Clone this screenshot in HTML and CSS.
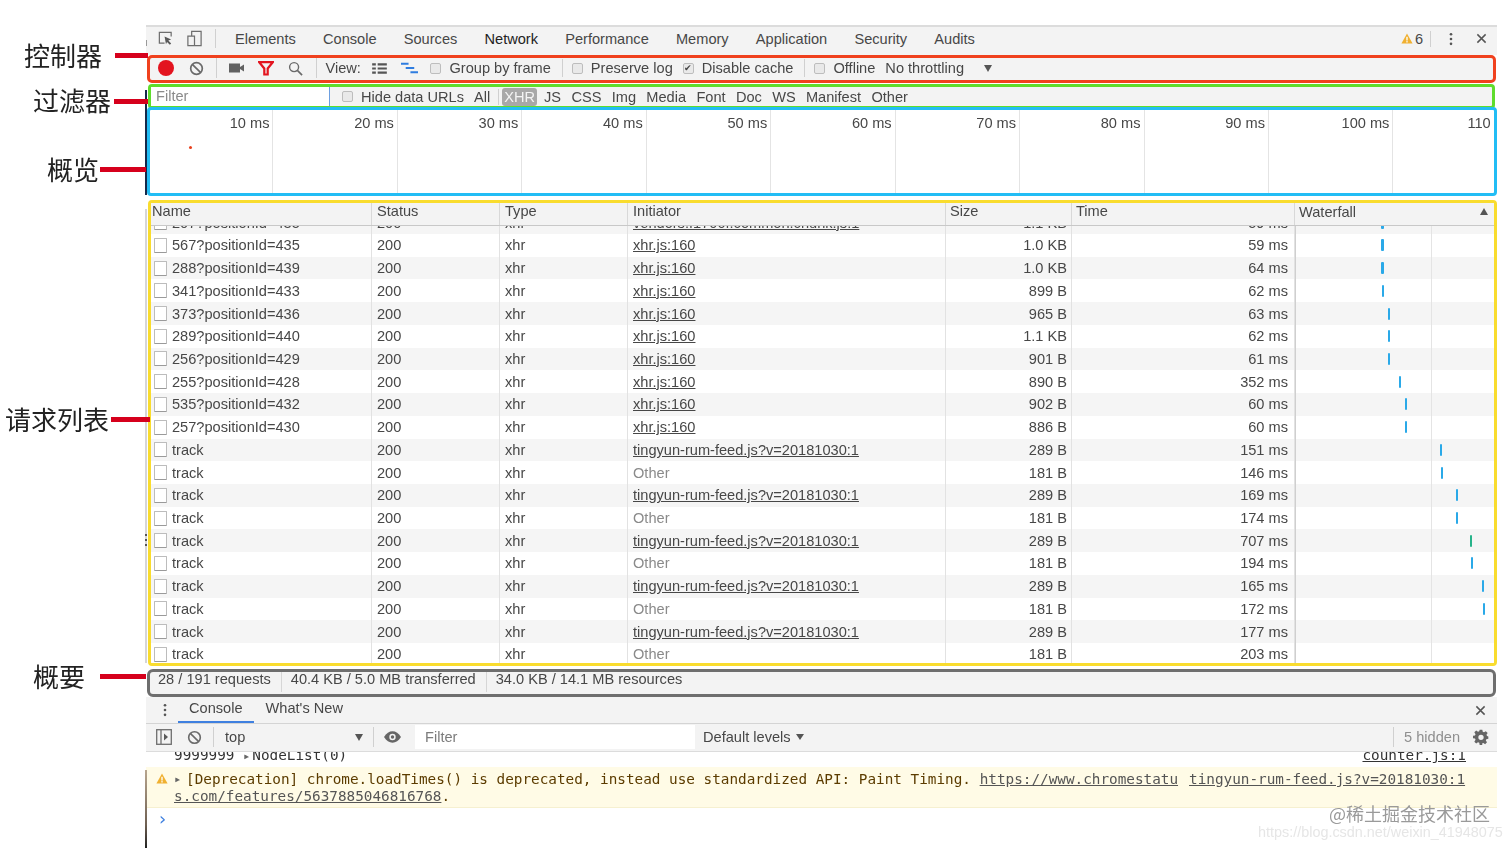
FILE: index.html
```html
<!DOCTYPE html>
<html lang="zh">
<head>
<meta charset="utf-8">
<title>Network</title>
<link rel="stylesheet" href="styles.css">
</head>
<body>
<div class="devtools">
  <div class="tabbar">
    <svg class="ico ico-inspect" viewBox="0 0 18 18"><path d="M8 14H2.5V2.5H15V7" fill="none" stroke="#6e6e6e" stroke-width="1.3"/><path d="M8 7l7 3-3 1.2 3 3-1.4 1.4-3-3L9.5 15z" fill="#5a5a5a"/></svg>
    <svg class="ico ico-device" viewBox="0 0 18 18"><path d="M6 6V1.5h10v15H2V6.5h7v10" fill="none" stroke="#6e6e6e" stroke-width="1.3"/></svg>
    <span class="sep sep-tall"></span>
    <nav class="tabs">
      <span>Elements</span><span>Console</span><span>Sources</span><span class="tab-on">Network</span><span>Performance</span><span>Memory</span><span>Application</span><span>Security</span><span>Audits</span>
    </nav>
    <div class="tab-end">
      <svg class="ico-warn" viewBox="0 0 14 13"><path d="M7 .5l6.600 12H.4z" fill="#f0b030"/><rect x="6.200" y="4.500" width="1.600" height="4.400" fill="#fff"/><rect x="6.200" y="9.600" width="1.600" height="1.600" fill="#fff"/></svg>
      <span class="warn-count">6</span>
      <span class="sep sep-warn"></span>
      <svg class="ico-dots" viewBox="0 0 4 16"><circle cx="2" cy="2.5" r="1.5"/><circle cx="2" cy="8" r="1.5"/><circle cx="2" cy="13.5" r="1.5"/></svg>
      <svg class="ico-x" viewBox="0 0 12 12"><path d="M1.5 1.5l9 9M10.5 1.5l-9 9" stroke="#555" stroke-width="1.6"/></svg>
    </div>
  </div>

  <div class="controls">
    <span class="rec"></span>
    <svg class="ico-block" viewBox="0 0 16 16"><circle cx="8" cy="8" r="6.200" fill="none" stroke="#6a6a6a" stroke-width="1.8"/><path d="M3.800 3.800l8.400 8.400" stroke="#6a6a6a" stroke-width="1.8"/></svg>
    <span class="sep sep-a"></span>
    <svg class="ico-cam" viewBox="0 0 16 12"><rect x="0" y="1.500" width="11" height="9" fill="#616161"/><path d="M11 5l4-2.500v7L11 7z" fill="#616161"/></svg>
    <svg class="ico-filter" viewBox="0 0 16 15"><path d="M1.200 1.200h13.600L9.700 7.500v6H6.300v-6z" fill="none" stroke="#e3141f" stroke-width="2.200"/></svg>
    <svg class="ico-search" viewBox="0 0 16 16"><circle cx="6.500" cy="6.500" r="4.800" fill="none" stroke="#6a6a6a" stroke-width="1.500"/><path d="M10 10l5 5" stroke="#6a6a6a" stroke-width="1.800"/></svg>
    <span class="sep sep-b"></span>
    <span class="lbl lbl-view">View:</span>
    <svg class="ico-list" viewBox="0 0 16 12"><path d="M0 1.500h4M6 1.500h10M0 6h4M6 6h10M0 10.500h4M6 10.500h10" stroke="#555" stroke-width="2.400"/></svg>
    <svg class="ico-wf" viewBox="0 0 18 12"><path d="M0 1.500h8M5 6h9M10 10.500h8" stroke="#2f7de0" stroke-width="2"/></svg>
    <span class="cb cb-group"></span><span class="lbl">Group by frame</span>
    <span class="sep sep-c"></span>
    <span class="cb"></span><span class="lbl lbl-preserve">Preserve log</span>
    <span class="cb cb-on">✔</span><span class="lbl">Disable cache</span>
    <span class="sep sep-d"></span>
    <span class="cb"></span><span class="lbl">Offline</span>
    <span class="lbl lbl-throttle">No throttling</span>
    <span class="caret caret-throttle"></span>
  </div>

  <div class="filters">
    <div class="filter-input">Filter</div>
    <span class="cb cb-hide"></span><span class="lbl">Hide data URLs</span>
    <span class="lbl lbl-all">All</span>
    <span class="sep sep-e"></span>
    <span class="pill">XHR</span>
    <span class="type">JS</span><span class="type">CSS</span><span class="type">Img</span><span class="type">Media</span><span class="type">Font</span><span class="type">Doc</span><span class="type">WS</span><span class="type">Manifest</span><span class="type">Other</span>
  </div>

  <div class="overview">
    <div class="tick">10 ms</div><div class="tick">20 ms</div><div class="tick">30 ms</div><div class="tick">40 ms</div><div class="tick">50 ms</div><div class="tick">60 ms</div><div class="tick">70 ms</div><div class="tick">80 ms</div><div class="tick">90 ms</div><div class="tick">100 ms</div><div class="tick tick-last">110 ms</div>
    <span class="dot"></span>
  </div>

  <div class="table">
    <div class="row head">
      <div class="c">Name</div><div class="c">Status</div><div class="c">Type</div><div class="c">Initiator</div><div class="c">Size</div><div class="c">Time</div><div class="c c-wf-head">Waterfall<span class="caret-up"></span></div>
    </div>
    <div class="scroller">
      <div class="rows">
        <div class="row"><div class="c c-name"><i class="file"></i>207?positionId=435</div><div class="c">200</div><div class="c">xhr</div><div class="c"><u>vendors.f1700f.common.chunk.js:1</u></div><div class="c r">1.1 KB</div><div class="c r">59 ms</div><div class="c wf"><b style="margin-left:85px"></b></div></div>
        <div class="row"><div class="c c-name"><i class="file"></i>567?positionId=435</div><div class="c">200</div><div class="c">xhr</div><div class="c"><u>xhr.js:160</u></div><div class="c r">1.0 KB</div><div class="c r">59 ms</div><div class="c wf"><b style="margin-left:85px"></b></div></div>
        <div class="row"><div class="c c-name"><i class="file"></i>288?positionId=439</div><div class="c">200</div><div class="c">xhr</div><div class="c"><u>xhr.js:160</u></div><div class="c r">1.0 KB</div><div class="c r">64 ms</div><div class="c wf"><b style="margin-left:85px"></b></div></div>
        <div class="row"><div class="c c-name"><i class="file"></i>341?positionId=433</div><div class="c">200</div><div class="c">xhr</div><div class="c"><u>xhr.js:160</u></div><div class="c r">899 B</div><div class="c r">62 ms</div><div class="c wf"><b style="margin-left:85.500px"></b></div></div>
        <div class="row"><div class="c c-name"><i class="file"></i>373?positionId=436</div><div class="c">200</div><div class="c">xhr</div><div class="c"><u>xhr.js:160</u></div><div class="c r">965 B</div><div class="c r">63 ms</div><div class="c wf"><b style="margin-left:91.500px"></b></div></div>
        <div class="row"><div class="c c-name"><i class="file"></i>289?positionId=440</div><div class="c">200</div><div class="c">xhr</div><div class="c"><u>xhr.js:160</u></div><div class="c r">1.1 KB</div><div class="c r">62 ms</div><div class="c wf"><b style="margin-left:91.500px"></b></div></div>
        <div class="row"><div class="c c-name"><i class="file"></i>256?positionId=429</div><div class="c">200</div><div class="c">xhr</div><div class="c"><u>xhr.js:160</u></div><div class="c r">901 B</div><div class="c r">61 ms</div><div class="c wf"><b style="margin-left:91.500px"></b></div></div>
        <div class="row"><div class="c c-name"><i class="file"></i>255?positionId=428</div><div class="c">200</div><div class="c">xhr</div><div class="c"><u>xhr.js:160</u></div><div class="c r">890 B</div><div class="c r">352 ms</div><div class="c wf"><b style="margin-left:102.500px"></b></div></div>
        <div class="row"><div class="c c-name"><i class="file"></i>535?positionId=432</div><div class="c">200</div><div class="c">xhr</div><div class="c"><u>xhr.js:160</u></div><div class="c r">902 B</div><div class="c r">60 ms</div><div class="c wf"><b style="margin-left:108.500px"></b></div></div>
        <div class="row"><div class="c c-name"><i class="file"></i>257?positionId=430</div><div class="c">200</div><div class="c">xhr</div><div class="c"><u>xhr.js:160</u></div><div class="c r">886 B</div><div class="c r">60 ms</div><div class="c wf"><b style="margin-left:108.500px"></b></div></div>
        <div class="row"><div class="c c-name"><i class="file"></i>track</div><div class="c">200</div><div class="c">xhr</div><div class="c"><u>tingyun-rum-feed.js?v=20181030:1</u></div><div class="c r">289 B</div><div class="c r">151 ms</div><div class="c wf"><b style="margin-left:143.500px"></b></div></div>
        <div class="row"><div class="c c-name"><i class="file"></i>track</div><div class="c">200</div><div class="c">xhr</div><div class="c muted">Other</div><div class="c r">181 B</div><div class="c r">146 ms</div><div class="c wf"><b style="margin-left:144.500px"></b></div></div>
        <div class="row"><div class="c c-name"><i class="file"></i>track</div><div class="c">200</div><div class="c">xhr</div><div class="c"><u>tingyun-rum-feed.js?v=20181030:1</u></div><div class="c r">289 B</div><div class="c r">169 ms</div><div class="c wf"><b style="margin-left:159.500px"></b></div></div>
        <div class="row"><div class="c c-name"><i class="file"></i>track</div><div class="c">200</div><div class="c">xhr</div><div class="c muted">Other</div><div class="c r">181 B</div><div class="c r">174 ms</div><div class="c wf"><b style="margin-left:159.500px"></b></div></div>
        <div class="row"><div class="c c-name"><i class="file"></i>track</div><div class="c">200</div><div class="c">xhr</div><div class="c"><u>tingyun-rum-feed.js?v=20181030:1</u></div><div class="c r">289 B</div><div class="c r">707 ms</div><div class="c wf"><b class="green" style="margin-left:173.500px"></b></div></div>
        <div class="row"><div class="c c-name"><i class="file"></i>track</div><div class="c">200</div><div class="c">xhr</div><div class="c muted">Other</div><div class="c r">181 B</div><div class="c r">194 ms</div><div class="c wf"><b style="margin-left:174.500px"></b></div></div>
        <div class="row"><div class="c c-name"><i class="file"></i>track</div><div class="c">200</div><div class="c">xhr</div><div class="c"><u>tingyun-rum-feed.js?v=20181030:1</u></div><div class="c r">289 B</div><div class="c r">165 ms</div><div class="c wf"><b style="margin-left:185.500px"></b></div></div>
        <div class="row"><div class="c c-name"><i class="file"></i>track</div><div class="c">200</div><div class="c">xhr</div><div class="c muted">Other</div><div class="c r">181 B</div><div class="c r">172 ms</div><div class="c wf"><b style="margin-left:186.500px"></b></div></div>
        <div class="row"><div class="c c-name"><i class="file"></i>track</div><div class="c">200</div><div class="c">xhr</div><div class="c"><u>tingyun-rum-feed.js?v=20181030:1</u></div><div class="c r">289 B</div><div class="c r">177 ms</div><div class="c wf"></div></div>
        <div class="row"><div class="c c-name"><i class="file"></i>track</div><div class="c">200</div><div class="c">xhr</div><div class="c muted">Other</div><div class="c r">181 B</div><div class="c r">203 ms</div><div class="c wf"></div></div>
      </div>
    </div>
  </div>

  <div class="summary">
    <span>28 / 191 requests</span><span>40.4 KB / 5.0 MB transferred</span><span>34.0 KB / 14.1 MB resources</span>
  </div>

  <div class="drawer-tabs">
    <svg class="ico-dots drawer-dots" viewBox="0 0 4 16"><circle cx="2" cy="2.500" r="1.500"/><circle cx="2" cy="8" r="1.500"/><circle cx="2" cy="13.500" r="1.500"/></svg>
    <span class="dtab dtab-on">Console</span>
    <span class="dtab dtab-new">What's New</span>
    <svg class="ico-x drawer-x" viewBox="0 0 12 12"><path d="M1.500 1.500l9 9M10.500 1.500l-9 9" stroke="#555" stroke-width="1.600"/></svg>
  </div>

  <div class="console-bar">
    <svg class="ico-side" viewBox="0 0 16 16"><rect x=".7" y=".7" width="14.600" height="14.600" fill="none" stroke="#6e6e6e" stroke-width="1.300"/><path d="M5 1v14" stroke="#6e6e6e" stroke-width="1.300"/><path d="M8 4.500l4 3.500-4 3.500z" fill="#5a5a5a"/></svg>
    <svg class="ico-block ico-block2" viewBox="0 0 16 16"><circle cx="8" cy="8" r="6.200" fill="none" stroke="#6a6a6a" stroke-width="1.700"/><path d="M3.800 3.800l8.400 8.400" stroke="#6a6a6a" stroke-width="1.700"/></svg>
    <span class="sep sep-f"></span>
    <span class="lbl ctx">top</span>
    <span class="caret caret-ctx"></span>
    <span class="sep sep-g"></span>
    <svg class="ico-eye" viewBox="0 0 18 12"><path d="M0 6c2.500-4 5.500-6 9-6s6.500 2 9 6c-2.500 4-5.500 6-9 6s-6.500-2-9-6z" fill="#666"/><circle cx="9" cy="6" r="3.400" fill="#f3f3f3"/><circle cx="9" cy="6" r="1.800" fill="#666"/></svg>
    <div class="cfilter">Filter</div>
    <span class="lbl levels">Default levels</span>
    <span class="caret caret-levels"></span>
    <span class="sep sep-h"></span>
    <span class="hidden-count">5 hidden</span>
    <svg class="ico-gear" viewBox="0 0 24 24"><path fill="#666" fill-rule="evenodd" d="M10 1h4l.6 3.200 1.900.8 2.700-1.800 2.800 2.800-1.800 2.700.8 1.900L23 11.200v3.600l-3 .6-.8 1.900 1.800 2.700-2.800 2.800-2.700-1.800-1.900.8L14 24h-4l-.6-3.200-1.900-.8-2.700 1.800L2 19l1.800-2.700-.8-1.900L0 13.800v-3.600l3-.6.800-1.900L2 5l2.800-2.800 2.700 1.800 1.900-.8zM12 8.500a4 4 0 1 0 0 8 4 4 0 0 0 0-8z"/></svg>
  </div>

  <div class="console">
    <div class="log-line"><span class="log-text">9999999 <span class="tri">▸</span>NodeList(0)</span><u class="log-src">counter.js:1</u></div>
    <div class="warn-row">
      <svg class="ico-warn warn-icon" viewBox="0 0 14 13"><path d="M7 .5l6.600 12H.4z" fill="#f0b030"/><rect x="6.200" y="4.500" width="1.600" height="4.400" fill="#fff"/><rect x="6.200" y="9.600" width="1.600" height="1.600" fill="#fff"/></svg>
      <div class="warn-body">
        <div class="warn-first"><span class="tri tri-warn">▸</span><span>[Deprecation] chrome.loadTimes() is deprecated, instead use standardized API: Paint Timing. <u>https://www.chromestatu</u></span><u class="warn-src">tingyun-rum-feed.js?v=20181030:1</u></div>
        <div class="warn-second"><u>s.com/features/5637885046816768</u>.</div>
      </div>
    </div>
    <div class="prompt">›</div>
  </div>
</div>

<span class="edge edge-top"></span>
<span class="edge edge-navy"></span>
<span class="edge edge-grey"></span>
<span class="edge edge-handle"></span>
<span class="edge edge-brown"></span>

<div class="note note-1"><span class="note-text">控制器</span><span class="note-bar"></span></div>
<div class="note note-2"><span class="note-text">过滤器</span><span class="note-bar"></span></div>
<div class="note note-3"><span class="note-text">概览</span><span class="note-bar"></span></div>
<div class="note note-4"><span class="note-text">请求列表</span><span class="note-bar"></span></div>
<div class="note note-5"><span class="note-text">概要</span><span class="note-bar"></span></div>

<div class="mark mark-a">@稀土掘金技术社区</div>
<div class="mark mark-b">https://blog.csdn.net/weixin_41948075</div>
</body>
</html>
```

FILE: styles.css
```css
* { box-sizing: border-box; }
html, body { margin: 0; padding: 0; }
body {
  width: 1512px;
  height: 848px;
  overflow: hidden;
  position: relative;
  background: #fff;
  font-family: "Liberation Sans", Arial, sans-serif;
  font-size: 14.6px;
  color: #474747;
}
svg { flex: none; display: block; }

.devtools {
  margin-left: 146px;
  width: 1351px;
  padding-top: 25px;
  display: flex;
  flex-direction: column;
  height: 848px;
  filter: blur(.45px);
}

.sep { flex: none; width: 1px; height: 20px; background: #d0d0d0; }

/* tab bar */
.tabbar {
  height: 30px;
  flex: none;
  display: flex;
  align-items: center;
  background: #f3f3f3;
  border-top: 2px solid #dcdcdc;
  padding: 0 0 5px 11px;
}
.ico-inspect { width: 17px; height: 17px; }
.ico-device { width: 17px; height: 17px; margin-left: 12px; }
.sep-tall { margin-left: 12px; height: 19px; }
.tabs { display: flex; gap: 27.2px; margin-left: 19px; }
.tab-on { color: #222; }
.tab-end { margin-left: auto; display: flex; align-items: center; padding-right: 10px; }
.ico-warn { width: 12px; height: 11px; }
.warn-count { margin-left: 2px; }
.sep-warn { height: 16px; margin-left: 7px; }
.ico-dots { width: 4px; height: 14px; margin-left: 18px; fill: #555; }
.ico-x { width: 11px; height: 11px; margin-left: 23px; }

/* controls */
.controls {
  height: 28px;
  flex: none;
  margin: 0 1px;
  display: flex;
  align-items: center;
  background: #f3f3f3;
  border: 3px solid #f0411e;
  border-radius: 5px;
  padding: 0 0 2px 7.5px;
}
.rec { flex: none; width: 16px; height: 16px; border-radius: 50%; background: #e3141f; }
.ico-block { width: 15px; height: 15px; margin-left: 15px; }
.sep-a { margin-left: 12px; }
.ico-cam { width: 16px; height: 12px; margin-left: 12px; }
.ico-filter { width: 16px; height: 15px; margin-left: 13px; }
.ico-search { width: 15px; height: 15px; margin-left: 14px; }
.sep-b { margin-left: 13px; }
.lbl { flex: none; white-space: nowrap; }
.lbl-view { margin-left: 9px; }
.ico-list { width: 15px; height: 11px; margin-left: 11px; }
.ico-wf { width: 17px; height: 12px; margin-left: 14px; }
.cb {
  flex: none;
  width: 11px;
  height: 11px;
  margin-right: 8px;
  border: 1px solid #bdbdbd;
  border-radius: 2px;
  background: #e9e9e9;
  font-size: 9px;
  line-height: 9px;
  text-align: center;
  color: #444;
}
.cb-group { margin-left: 12.5px; }
.sep-c { margin: 0 9px 0 11px; height: 18px; }
.lbl-preserve { margin-right: 10px; }
.sep-d { margin: 0 9px 0 11px; height: 18px; }
.lbl-throttle { margin-left: 10px; }
.caret { flex: none; width: 0; height: 0; border-left: 4px solid transparent; border-right: 4px solid transparent; border-top: 7px solid #555; }
.caret-throttle { margin-left: 20px; }

/* filters */
.filters {
  height: 25px;
  flex: none;
  margin: 1px 2px 0;
  display: flex;
  align-items: center;
  background: #f3f3f3;
  border: 3px solid #5fdc2c;
  border-radius: 4px;
}
.filter-input {
  flex: none;
  width: 179px;
  height: 100%;
  background: #fff;
  border-right: 1px solid #6d9fe0;
  padding-left: 5px;
  line-height: 18px;
  color: #8a8a8a;
}
.cb-hide { margin-left: 12px; }
.lbl-all { margin-left: 10px; }
.sep-e { margin-left: 8px; height: 16px; }
.pill {
  flex: none;
  margin-left: 3px;
  padding: 0 2px;
  height: 18px;
  line-height: 18px;
  border-radius: 3px;
  background: #a8a8a8;
  color: #f4f4f4;
}
.type { flex: none; margin-left: 10.3px; }
.pill + .type { margin-left: 7px; }

/* overview */
.overview {
  position: relative;
  height: 89px;
  flex: none;
  margin: -2px 0 0 1px;
  display: grid;
  grid-template-columns: 123.45px repeat(9, 124.45px) 1fr;
  background: #fff;
  border: 3px solid #22bdf5;
  border-radius: 4px;
  overflow: hidden;
}
.tick {
  text-align: right;
  padding: 4px 3px 0 0;
  border-right: 1px solid #e4e4e4;
  line-height: 18px;
  white-space: nowrap;
}
.tick-last { border: 0; text-align: left; padding-left: 74px; }
.dot {
  position: absolute;
  left: 39px;
  top: 36px;
  width: 3px;
  height: 3px;
  border-radius: 50%;
  background: #e8401c;
}

/* table */
.table {
  height: 466px;
  flex: none;
  margin: 4px 0 0 2px;
  display: flex;
  flex-direction: column;
  border: 3px solid #f9dc2e;
  border-radius: 4px;
  overflow: hidden;
  background: #fff;
}
.row {
  display: grid;
  grid-template-columns: 221px 128px 128px 318px 126px 223px 1fr;
  height: 22.72px;
  background: #fff;
}
.rows .row:nth-child(odd) { background: #f5f5f5; }
.c {
  display: flex;
  align-items: center;
  padding-left: 5px;
  padding-right: 6px;
  border-right: 1px solid #e2e2e2;
  white-space: nowrap;
  overflow: hidden;
}
.c:last-child { border-right: 0; }
.r { justify-content: flex-end; }
.row .c:nth-child(5) { padding-right: 4px; }
.muted { color: #8a8a8a; }
.head { height: 23px; flex: none; background: #f3f3f3; border-bottom: 1px solid #c8c8c8; }
.head .c { align-items: flex-start; line-height: 16px; border-right-color: #d8d8d8; }
.head .c:first-child { padding-left: 1px; }
.head .c:nth-child(n+5) { padding-left: 4px; }
.c-wf-head { padding-top: 1px; justify-content: space-between; padding-right: 6px; }
.caret-up { width: 0; height: 0; margin-top: 4px; border-left: 4px solid transparent; border-right: 4px solid transparent; border-bottom: 7px solid #555; }
.scroller { flex: 1; overflow: hidden; }
.rows { margin-top: -14.7px; }
.c-name { padding-left: 3px; }
.file {
  flex: none;
  width: 13px;
  height: 15px;
  margin-right: 5px;
  background: #fff;
  border: 1px solid #bcbcbc;
  border-bottom-color: #9a9a9a;
  border-radius: 1px;
}
.wf {
  padding: 0;
  background: linear-gradient(#e4e4e4, #e4e4e4) no-repeat 135px 0 / 1px 100%;
  border-left: 1px solid #cfcfcf;
}
.wf b {
  flex: none;
  display: block;
  width: 2.5px;
  height: 12px;
  border-radius: 1px;
  background: #2aa9e8;
}
.wf .green { background: #27b38a; }

/* summary */
.summary {
  height: 28px;
  flex: none;
  margin: 3px 1px 0;
  display: flex;
  align-items: flex-start;
  background: #f3f3f3;
  border: 3px solid #6e6e6e;
  border-radius: 6px;
  padding-left: 8px;
  line-height: 15px;
  white-space: nowrap;
}
.summary span { padding: 0 10px 0 0; margin-right: 9px; height: 20px; border-right: 1px solid #d6d6d6; }
.summary span:last-child { border: 0; }

/* drawer */
.drawer-tabs {
  height: 27px;
  flex: none;
  display: flex;
  align-items: center;
  background: #f3f3f3;
  border-bottom: 1px solid #d4d4d4;
  padding-left: 17px;
}
.drawer-dots { margin-left: 0; }
.dtab { flex: none; height: 100%; line-height: 22px; padding: 0 11px; }
.dtab-on { margin-left: 11px; border-bottom: 2px solid #3f80e0; }
.dtab-new { margin-left: 1px; }
.drawer-x { margin-left: auto; margin-right: 11px; }

.console-bar {
  height: 28px;
  flex: none;
  display: flex;
  align-items: center;
  background: #f3f3f3;
  border-bottom: 1px solid #dcdcdc;
  padding: 0 0 1px 10px;
}
.ico-side { width: 16px; height: 16px; }
.ico-block2 { margin-left: 15px; }
.sep-f { margin-left: 11px; }
.ctx { margin-left: 11px; width: 130px; }
.sep-g { margin-left: 10px; }
.ico-eye { width: 17px; height: 12px; margin-left: 10px; }
.cfilter {
  flex: none;
  width: 280px;
  height: 24px;
  line-height: 24px;
  margin-left: 14px;
  padding-left: 10px;
  background: #fff;
  color: #7c7c7c;
}
.levels { margin-left: 8px; }
.caret-levels { margin-left: 5px; border-top-width: 6px; }
.sep-h { margin-left: auto; height: 20px; }
.hidden-count { flex: none; margin-left: 10px; color: #8f8f8f; }
.ico-gear { width: 16px; height: 16px; margin-left: 13px; margin-right: 8px; }

.console {
  flex: 1;
  min-height: 0;
  overflow: hidden;
  background: #fff;
  font-family: "DejaVu Sans Mono", "Liberation Mono", monospace;
  font-size: 14.33px;
  line-height: 17px;
}
.log-line {
  height: 15px;
  display: flex;
  justify-content: space-between;
  overflow: hidden;
  padding: 0 31px 0 28px;
  color: #333;
}
.log-text, .log-src { margin-top: -5px; }
.tri { font-size: 12px; color: #666; margin-right: 2px; }
.warn-row {
  height: 41px;
  display: flex;
  background: #fffbe6;
  border-bottom: 1px solid #f6f0d0;
  color: #5c3c00;
  padding-top: 4px;
}
.warn-icon { margin: 2px 0 0 10px; }
.warn-body { margin-left: 6px; flex: 1; min-width: 0; }
.warn-first { display: flex; align-items: flex-start; white-space: nowrap; }
.tri-warn { width: 8px; margin: 0 4px 0 0; flex: none; }
.warn-src { margin-left: 11px; color: #444; }
.warn-body u { color: #555; }
.prompt { padding: 2px 0 0 11px; color: #3f80e0; font-size: 18px; }

/* edge slivers of the captured window */
.edge { position: absolute; display: block; left: 145px; width: 2px; }
.edge-top { top: 40px; height: 6px; left: 146px; width: 1px; background: #9a9a9a; }
.edge-navy { top: 90px; height: 105px; background: #14294a; }
.edge-grey { top: 209px; height: 454px; background: #d6d6d6; }
.edge-handle { top: 534px; height: 14px; background: repeating-linear-gradient(#555 0 2px, transparent 2px 5px); }
.edge-brown { top: 770px; height: 78px; background: linear-gradient(#b8a68f, #6f6052 70%, #222); }

/* annotations */
.note {
  position: absolute;
  display: flex;
  align-items: center;
  white-space: nowrap;
}
.note-text {
  font-family: "Noto Sans CJK SC", sans-serif;
  font-size: 26px;
  line-height: 32px;
  color: #222;
}
.note-bar { flex: none; height: 5px; background: #d6001c; }
.note-1 { left: 24px; top: 39px; }
.note-1 .note-bar { width: 33px; margin-left: 13px; }
.note-2 { left: 33px; top: 84px; }
.note-2 .note-bar { width: 34px; margin: 2px 0 0 3px; }
.note-3 { left: 47px; top: 153px; }
.note-3 .note-bar { width: 46px; margin-left: 1px; }
.note-4 { left: 5px; top: 403px; }
.note-4 .note-bar { width: 39px; margin-left: 2px; }
.note-5 { left: 33px; top: 660px; }
.note-5 .note-bar { width: 46px; margin-left: 15px; }

.mark { position: absolute; white-space: nowrap; }
.mark-a {
  left: 1329px;
  top: 801px;
  font-family: "Noto Sans CJK SC", sans-serif;
  font-size: 18px;
  line-height: 24px;
  color: #9a9a9a;
}
.mark-b {
  left: 1258px;
  top: 823px;
  font-size: 14.4px;
  line-height: 18px;
  color: #e6e6e6;
}
```
